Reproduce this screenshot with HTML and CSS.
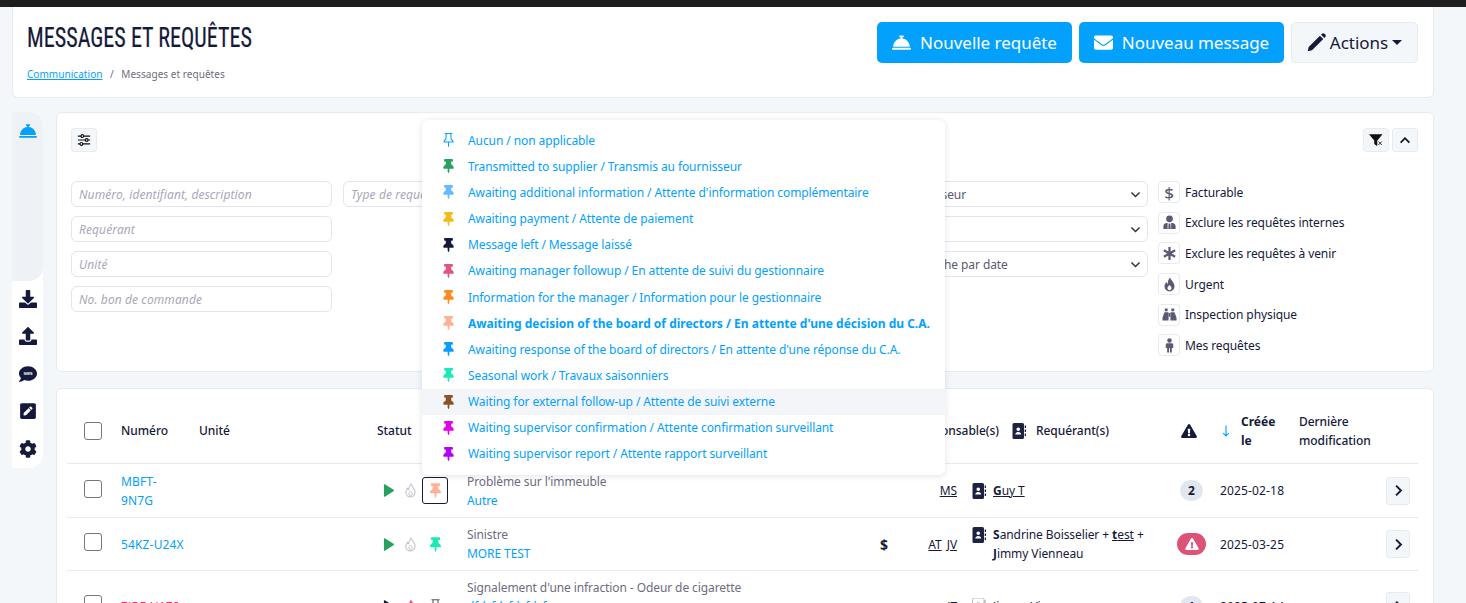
FILE: index.html
```html
<!DOCTYPE html>
<html lang="fr">
<head>
<meta charset="utf-8">
<title>Messages et requêtes</title>
<link rel="stylesheet" href="styles.css">
</head>
<body>
<svg class="sprite" aria-hidden="true">
  <symbol id="i-pin" viewBox="0 0 384 512"><path d="M298.028 214.267L285.793 96H328c13.255 0 24-10.745 24-24V24c0-13.255-10.745-24-24-24H56C42.745 0 32 10.745 32 24v48c0 13.255 10.745 24 24 24h42.207L85.972 214.267C37.465 236.82 0 277.261 0 328c0 13.255 10.745 24 24 24h136v104.007c0 1.242.289 2.467.845 3.578l24 48c2.941 5.882 11.364 5.893 14.311 0l24-48a8.008 8.008 0 0 0 .845-3.578V352h136c13.255 0 24-10.745 24-24-.001-51.183-37.983-91.42-85.973-113.733z"/></symbol>
  <symbol id="i-pin-o" viewBox="0 0 384 512"><path fill="none" stroke="currentColor" stroke-width="38" d="M50 22h284M110 22L96 230C60 250 30 280 24 332h336C354 280 324 250 288 230L274 22M192 340v160"/></symbol>
  <symbol id="i-bell" viewBox="0 0 512 512"><path d="M216 64c-13.3 0-24 10.7-24 24s10.7 24 24 24h16v33.3C119.6 157.2 32 252.4 32 368H480c0-115.6-87.6-210.8-200-222.7V112h16c13.3 0 24-10.7 24-24s-10.7-24-24-24H256 216zM24 400c-13.3 0-24 10.7-24 24s10.7 24 24 24H488c13.3 0 24-10.7 24-24s-10.7-24-24-24H24z"/></symbol>
  <symbol id="i-env" viewBox="0 0 512 512"><path d="M502.3 190.8c3.9-3.1 9.7-.2 9.7 4.7V400c0 26.5-21.5 48-48 48H48c-26.5 0-48-21.5-48-48V195.6c0-5 5.7-7.8 9.7-4.7 22.4 17.4 52.1 39.5 154.1 113.6 21.1 15.4 56.7 47.8 92.2 47.6 35.7.3 72-32.8 92.3-47.6 102-74.1 131.6-96.3 154-113.7zM256 320c23.2.4 56.6-29.2 73.4-41.4 132.7-96.3 142.8-104.7 173.4-128.7 5.8-4.5 9.2-11.5 9.2-18.9v-19c0-26.5-21.5-48-48-48H48C21.5 64 0 85.5 0 112v19c0 7.4 3.4 14.3 9.2 18.9 30.6 23.9 40.7 32.4 173.4 128.7 16.8 12.2 50.2 41.8 73.4 41.4z"/></symbol>
  <symbol id="i-pen" viewBox="0 0 16 16"><path d="M.6 15.400l.8-3.600L10.900 2.300l2.800 2.800-9.500 9.500zM11.800 1.400l.8-.8c.6-.6 1.500-.6 2.100 0l.7.7c.6.6.6 1.500 0 2.100l-.8.8z"/></symbol>
  <symbol id="i-down" viewBox="0 0 512 512"><path d="M216 0h80c13.3 0 24 10.7 24 24v168h87.7c17.8 0 26.7 21.5 14.1 34.1L269.7 378.3c-7.5 7.5-19.8 7.5-27.3 0L90.1 226.1c-12.6-12.6-3.7-34.1 14.1-34.1H192V24c0-13.3 10.7-24 24-24zm296 376v112c0 13.3-10.7 24-24 24H24c-13.3 0-24-10.7-24-24V376c0-13.3 10.7-24 24-24h146.7l49 49c20.1 20.1 52.5 20.1 72.6 0l49-49H488c13.3 0 24 10.7 24 24z"/></symbol>
  <symbol id="i-up" viewBox="0 0 512 512"><path d="M296 384h-80c-13.3 0-24-10.7-24-24V192h-87.7c-17.8 0-26.7-21.5-14.1-34.1L242.3 5.7c7.5-7.5 19.8-7.5 27.3 0l152.2 152.2c12.6 12.6 3.7 34.1-14.1 34.1H320v168c0 13.3-10.7 24-24 24zm216-8v112c0 13.3-10.7 24-24 24H24c-13.3 0-24-10.7-24-24V376c0-13.3 10.7-24 24-24h136v8c0 30.9 25.1 56 56 56h80c30.9 0 56-25.1 56-56v-8h136c13.3 0 24 10.7 24 24z"/></symbol>
  <symbol id="i-sms" viewBox="0 0 512 512"><path d="M256 32C114.6 32 0 125.1 0 240c0 49.6 21.4 95 57 130.7C44.5 421.1 2.7 466 2.2 466.5c-2.2 2.3-2.8 5.7-1.5 8.7 1.3 3 4.1 4.8 7.3 4.8 66.3 0 116-31.8 140.6-51.4 32.7 12.3 69 19.4 107.4 19.4 141.4 0 256-93.1 256-208S397.4 32 256 32z"/><text x="256" y="296" text-anchor="middle" class="sms-label">SMS</text></symbol>
  <symbol id="i-edit" viewBox="0 0 448 512"><path d="M400 480H48c-26.5 0-48-21.5-48-48V80c0-26.5 21.5-48 48-48h352c26.5 0 48 21.5 48 48v352c0 26.5-21.5 48-48 48zM238.1 177.9L102.4 313.6l-6.3 57.1c-.8 7.6 5.6 14.1 13.3 13.3l57.1-6.3L302.2 242c2.3-2.3 2.3-6.1 0-8.5L246.7 178c-2.5-2.4-6.3-2.4-8.6-.1zM345 165.1L314.9 135c-9.4-9.4-24.6-9.4-33.9 0l-23.1 23.1c-2.3 2.3-2.3 6.1 0 8.5l55.5 55.5c2.3 2.3 6.1 2.3 8.5 0L345 199c9.3-9.3 9.3-24.5 0-33.9z"/></symbol>
  <symbol id="i-cog" viewBox="0 0 512 512"><path d="M487.4 315.7l-42.6-24.6c4.3-23.2 4.3-47 0-70.2l42.6-24.6c4.9-2.8 7.1-8.6 5.5-14-11.1-35.6-30-67.8-54.7-94.6-3.8-4.1-10-5.1-14.8-2.3L380.8 110c-17.9-15.4-38.5-27.3-60.8-35.1V25.8c0-5.6-3.9-10.5-9.4-11.7-36.7-8.2-74.3-7.8-109.2 0-5.5 1.2-9.4 6.1-9.4 11.7V75c-22.2 7.9-42.8 19.8-60.8 35.1L88.7 85.5c-4.9-2.8-11-1.9-14.8 2.3-24.7 26.7-43.6 58.9-54.7 94.6-1.7 5.4.6 11.2 5.5 14L67.3 221c-4.3 23.2-4.3 47 0 70.2l-42.6 24.6c-4.9 2.8-7.1 8.6-5.5 14 11.1 35.6 30 67.8 54.7 94.6 3.8 4.1 10 5.1 14.8 2.3l42.6-24.6c17.9 15.4 38.5 27.3 60.8 35.1v49.2c0 5.6 3.9 10.5 9.4 11.7 36.7 8.2 74.3 7.8 109.2 0 5.5-1.2 9.4-6.1 9.4-11.7v-49.2c22.2-7.9 42.8-19.8 60.8-35.1l42.6 24.6c4.9 2.8 11 1.9 14.8-2.3 24.7-26.7 43.6-58.9 54.7-94.6 1.5-5.5-.7-11.3-5.6-14.1zM256 336c-44.1 0-80-35.9-80-80s35.9-80 80-80 80 35.9 80 80-35.9 80-80 80z"/></symbol>
  <symbol id="i-sliders" viewBox="0 0 16 16"><path fill="none" stroke="currentColor" stroke-width="1.3" d="M1 3.5h14M1 8h14M1 12.5h14"/><g fill="#fff" stroke="currentColor" stroke-width="1.3"><circle cx="6" cy="3.5" r="1.6"/><circle cx="11" cy="8" r="1.6"/><circle cx="5" cy="12.5" r="1.6"/></g></symbol>
  <symbol id="i-filter" viewBox="0 0 16 16"><path d="M0 1.500h15.500L9.500 8.500v6.500L6 12.500V8.500z"/><path fill="none" stroke="#f4f7fa" stroke-width="1.800" d="M10 9l5.500 5.500M15.500 9L10 14.500"/><path fill="none" stroke="currentColor" stroke-width="1" d="M10.700 9.700l4 4M14.700 9.700l-4 4"/></symbol>
  <symbol id="i-chev-up" viewBox="0 0 16 16"><path fill="none" stroke="currentColor" stroke-width="2" d="M3 11l5-5 5 5"/></symbol>
  <symbol id="i-chev-right" viewBox="0 0 16 16"><path fill="none" stroke="currentColor" stroke-width="2.4" d="M5 2l6 6-6 6"/></symbol>
  <symbol id="i-chev-down" viewBox="0 0 16 16"><path fill="none" stroke="currentColor" stroke-width="1.8" d="M3 5.5l5 5 5-5"/></symbol>
  <symbol id="i-user-tie" viewBox="0 0 16 16"><circle cx="8" cy="4" r="3.6"/><path d="M1.500 15v-3c0-2 1.500-3.500 3.500-3.500h1v6.500zM9.800 15V8.500h1.200c2 0 3.500 1.500 3.500 3.500v3zM7 9h2l.3 6H6.700z"/></symbol>
  <symbol id="i-asterisk" viewBox="0 0 16 16"><path fill="none" stroke="currentColor" stroke-width="2.400" d="M8 1v14M2 4.500l12 7M14 4.500l-12 7"/></symbol>
  <symbol id="i-fire" viewBox="2.500 .5 11 15"><path fill-rule="evenodd" d="M8.500 1c.5 2.500 4.500 4.500 4.500 9a5 5 0 0 1-10 0c0-2 1-3.500 2-4.500.2 1 .7 1.700 1.300 2C6 5 7 3 8.500 1zM8 8.500c-1 1.200-2 2-2 3.200a2 2 0 0 0 4 0c0-1.200-1-2-2-3.200z"/></symbol>
  <symbol id="i-drop" viewBox="2.500 .5 11 15"><path fill="none" stroke="currentColor" stroke-width="1.100" d="M8.500 1.500c.4 2.500 4 4 4 8.300a4.600 4.600 0 0 1-9.200 0c0-1.800.8-3 1.700-4 .3.800.7 1.300 1.200 1.500C6.300 5.300 7.300 3.300 8.500 1.500z"/><path fill="none" stroke="currentColor" stroke-width="1" d="M8 8.500c-.8 1-1.700 1.800-1.700 2.800a1.700 1.700 0 0 0 3.400 0c0-1-.9-1.800-1.700-2.800z"/></symbol>
  <symbol id="i-binoc" viewBox="0 0 16 16"><path d="M3 1.500h3v3H3zM10 1.500h3v3h-3zM2.600 5.500H7v9H0.500v-3zM9 5.500h4.400l2.100 6v3H9zM7.300 6.500h1.400v4H7.300z"/></symbol>
  <symbol id="i-male" viewBox="0 0 16 16"><circle cx="8" cy="2.700" r="2.400"/><path d="M5.500 5.700h5c.8 0 1.500.7 1.500 1.500v3.500h-1.500V15.500H8.500v-4.500h-1v4.500H5.500v-4.800H4V7.200c0-.8.700-1.500 1.500-1.500z"/></symbol>
  <symbol id="i-warn" viewBox="0 0 576 512"><path d="M569.517 440.013C587.975 472.007 564.806 512 527.94 512H48.054c-36.937 0-59.999-40.055-41.577-71.987L246.423 24c18.467-32.009 64.720-31.951 83.154 0l239.94 416.013zM288 354c-25.405 0-46 20.595-46 46s20.595 46 46 46 46-20.595 46-46-20.595-46-46-46zm-43.673-165.346l7.418 136c.347 6.364 5.609 11.346 11.982 11.346h48.546c6.373 0 11.635-4.982 11.982-11.346l7.418-136c.375-6.874-5.098-12.654-11.982-12.654h-63.383c-6.884 0-12.356 5.780-11.981 12.654z"/></symbol>
  <symbol id="i-book" viewBox="0 0 14 16"><path fill-rule="evenodd" d="M2 0h8.500A1.500 1.500 0 0 1 12 1.500v13a1.500 1.500 0 0 1-1.500 1.500H2a1.500 1.500 0 0 1-1.500-1.500v-13A1.500 1.500 0 0 1 2 0zM6.250 4.500a1.800 1.800 0 1 0 0 3.600 1.800 1.800 0 0 0 0-3.600zM3.300 11.500h5.900c0-1.500-1.300-2.500-2.950-2.500S3.300 10 3.300 11.500z"/><path d="M12.700 2.500H14v2.500h-1.300zM12.700 6.500H14v2.500h-1.300zM12.700 10.500H14v2.500h-1.300z"/></symbol>
  <symbol id="i-play" viewBox="0 0 12 14"><path d="M1 .8c0-.5.5-.8 1-.5l9.500 6a.8.8 0 0 1 0 1.400L2 13.700c-.5.300-1 0-1-.5z"/></symbol>
  <symbol id="i-arrow" viewBox="0 0 8 12"><path fill="none" stroke="currentColor" stroke-width="1.100" d="M4 .5v10.500M1.200 8.200L4 11l2.800-2.800"/></symbol>
</svg>

<div class="topbar"></div>
<div class="page">
  <header class="head-card">
    <div class="head-title">
      <h1>MESSAGES ET REQUÊTES</h1>
      <nav class="crumbs"><a href="#">Communication</a><span class="sep">/</span><span>Messages et requêtes</span></nav>
    </div>
    <div class="head-actions">
      <button class="btn primary"><svg class="ic-bell"><use href="#i-bell"/></svg>Nouvelle requête</button>
      <button class="btn primary"><svg class="ic-env"><use href="#i-env"/></svg>Nouveau message</button>
      <button class="btn light"><svg class="ic-pen"><use href="#i-pen"/></svg>Actions<span class="caret"></span></button>
    </div>
  </header>

  <div class="workspace">
    <aside class="side">
      <div class="side-tab"><svg class="side-ic active"><use href="#i-bell"/></svg></div>
      <div class="side-rest">
        <svg class="side-ic"><use href="#i-down"/></svg>
        <svg class="side-ic"><use href="#i-up"/></svg>
        <svg class="side-ic"><use href="#i-sms"/></svg>
        <svg class="side-ic"><use href="#i-edit"/></svg>
        <svg class="side-ic"><use href="#i-cog"/></svg>
      </div>
    </aside>

    <main class="main">
      <section class="card filters">
        <div class="filter-top">
          <button class="mini"><svg><use href="#i-sliders"/></svg></button>
          <div class="filter-tools">
            <button class="mini"><svg><use href="#i-filter"/></svg></button>
            <button class="mini"><svg><use href="#i-chev-up"/></svg></button>
          </div>
        </div>
        <div class="filter-body">
          <div class="field-grid">
            <div class="field">Numéro, identifiant, description</div>
            <div class="field">Type de requête</div>
            <div class="gap"></div>
            <div class="select">Fournisseur<svg><use href="#i-chev-down"/></svg></div>
            <div class="field">Requérant</div>
            <div class="gap"></div>
            <div class="gap"></div>
            <div class="select"><svg><use href="#i-chev-down"/></svg></div>
            <div class="field">Unité</div>
            <div class="gap"></div>
            <div class="gap"></div>
            <div class="select">Recherche par date<svg><use href="#i-chev-down"/></svg></div>
            <div class="field">No. bon de commande</div>
          </div>
          <ul class="toggles">
            <li><span class="tg"><span class="tg-dollar">$</span></span>Facturable</li>
            <li><span class="tg"><svg><use href="#i-user-tie"/></svg></span>Exclure les requêtes internes</li>
            <li><span class="tg"><svg><use href="#i-asterisk"/></svg></span>Exclure les requêtes à venir</li>
            <li><span class="tg"><svg><use href="#i-fire"/></svg></span>Urgent</li>
            <li><span class="tg"><svg><use href="#i-binoc"/></svg></span>Inspection physique</li>
            <li><span class="tg"><svg><use href="#i-male"/></svg></span>Mes requêtes</li>
          </ul>
        </div>
      </section>

      <section class="card list">
        <div class="thead">
          <span class="box"></span>
          <span>Numéro</span>
          <span>Unité</span>
          <span>Statut</span>
          <span>Description</span>
          <span class="th-resp">Responsable(s)</span>
          <span class="th-book"><svg class="ic-book"><use href="#i-book"/></svg></span>
          <span>Requérant(s)</span>
          <span class="center th-warn"><svg class="ic-warn"><use href="#i-warn"/></svg></span>
          <span class="center sort"><svg class="ic-arrow"><use href="#i-arrow"/></svg></span>
          <strong>Créée<br>le</strong>
          <span>Dernière modification</span>
        </div>

        <div class="trow">
          <span class="box"></span>
          <a href="#" class="num">MBFT-<br>9N7G</a>
          <span></span>
          <span class="status">
            <svg class="ic-play green"><use href="#i-play"/></svg>
            <svg class="ic-drop"><use href="#i-drop"/></svg>
            <span class="pin-slot focused"><svg class="pin peach"><use href="#i-pin"/></svg></span>
          </span>
          <span class="desc">Problème sur l'immeuble<a href="#">Autre</a></span>
          <span></span>
          <span class="resp"><u>MS</u></span>
          <span class="req"><svg class="ic-book"><use href="#i-book"/></svg><span><u><b>G</b>uy T</u></span></span>
          <span class="center"><span class="badge">2</span></span>
          <span class="date">2025-02-18</span>
          <button class="open"><svg><use href="#i-chev-right"/></svg></button>
        </div>

        <div class="trow short">
          <span class="box"></span>
          <a href="#" class="num">54KZ-U24X</a>
          <span></span>
          <span class="status">
            <svg class="ic-play green"><use href="#i-play"/></svg>
            <svg class="ic-drop"><use href="#i-drop"/></svg>
            <span class="pin-slot"><svg class="pin mint"><use href="#i-pin"/></svg></span>
          </span>
          <span class="desc">Sinistre<a href="#">MORE TEST</a></span>
          <b class="dollar">$</b>
          <span class="resp"><u>AT</u> <u>JV</u></span>
          <span class="req top"><svg class="ic-book"><use href="#i-book"/></svg><span><b>S</b>andrine Boisselier + <u><b>t</b>est</u> +<br><b>J</b>immy Vienneau</span></span>
          <span class="center"><span class="badge danger"><svg><use href="#i-warn"/></svg></span></span>
          <span class="date">2025-03-25</span>
          <button class="open"><svg><use href="#i-chev-right"/></svg></button>
        </div>

        <div class="trow tall">
          <span class="box"></span>
          <a href="#" class="num red">7JBF-U1Z8</a>
          <span></span>
          <span class="status">
            <svg class="ic-play navy"><use href="#i-play"/></svg>
            <svg class="ic-fire pink"><use href="#i-fire"/></svg>
            <span class="pin-slot"><svg class="pin outline"><use href="#i-pin-o"/></svg></span>
          </span>
          <span class="desc three">Signalement d'une infraction - Odeur de cigarette<a href="#">dfdsfdsfdsfdsfs</a></span>
          <span></span>
          <span class="resp"><u>JT</u></span>
          <span class="req"><svg class="ic-book faint"><use href="#i-book"/></svg><span>Jimmy Vienneau</span></span>
          <span class="center"><span class="badge">1</span></span>
          <span class="date">2025-07-14</span>
          <button class="open"><svg><use href="#i-chev-right"/></svg></button>
        </div>
      </section>
    </main>
  </div>
</div>

<ul class="menu">
  <li><svg class="c-none"><use href="#i-pin-o"/></svg>Aucun / non applicable</li>
  <li><svg class="c-green"><use href="#i-pin"/></svg>Transmitted to supplier / Transmis au fournisseur</li>
  <li><svg class="c-sky"><use href="#i-pin"/></svg>Awaiting additional information / Attente d'information complémentaire</li>
  <li><svg class="c-yellow"><use href="#i-pin"/></svg>Awaiting payment / Attente de paiement</li>
  <li><svg class="c-navy"><use href="#i-pin"/></svg>Message left / Message laissé</li>
  <li><svg class="c-rose"><use href="#i-pin"/></svg>Awaiting manager followup / En attente de suivi du gestionnaire</li>
  <li><svg class="c-orange"><use href="#i-pin"/></svg>Information for the manager / Information pour le gestionnaire</li>
  <li class="current"><svg class="c-peach"><use href="#i-pin"/></svg>Awaiting decision of the board of directors / En attente d'une décision du C.A.</li>
  <li><svg class="c-blue"><use href="#i-pin"/></svg>Awaiting response of the board of directors / En attente d'une réponse du C.A.</li>
  <li><svg class="c-mint"><use href="#i-pin"/></svg>Seasonal work / Travaux saisonniers</li>
  <li class="hover"><svg class="c-brown"><use href="#i-pin"/></svg>Waiting for external follow-up / Attente de suivi externe</li>
  <li><svg class="c-magenta"><use href="#i-pin"/></svg>Waiting supervisor confirmation / Attente confirmation surveillant</li>
  <li><svg class="c-purple"><use href="#i-pin"/></svg>Waiting supervisor report / Attente rapport surveillant</li>
</ul>
</body>
</html>
```

FILE: styles.css
```css
* { box-sizing: border-box; }
html, body { margin: 0; height: 603px; overflow: hidden; }
body {
  position: relative;
  background: #f4f7fa;
  color: #15193a;
  font-family: "Noto Sans", "Open Sans", sans-serif;
  font-size: 12px;
  line-height: 19px;
  letter-spacing: -0.09px;
}
a { color: #03a1fc; text-decoration: none; }
b, strong { letter-spacing: 0; }
ul { list-style: none; margin: 0; padding: 0; }
button { font-family: inherit; cursor: pointer; }
.sprite { position: absolute; width: 0; height: 0; }
.sms-label { font: 700 120px "Liberation Sans", sans-serif; fill: #fff; }

.topbar { height: 7px; background: #1e1e1e; }
.page { padding: 0 32px 0 12px; }

.head-card {
  height: 91px;
  background: #fff;
  border: 1px solid #e7ebf1;
  border-top: 0;
  border-radius: 0 0 6px 6px;
  padding: 15px 15px 0 14px;
  display: flex;
  justify-content: space-between;
  align-items: flex-start;
}
h1 {
  margin: 1px 0 0;
  font: 400 28px/30px "Roboto Condensed", "Liberation Sans Narrow", sans-serif;
  color: #15193a;
  letter-spacing: 0;
  white-space: nowrap;
  transform: scaleX(.79);
  transform-origin: left center;
  -webkit-text-stroke: .2px #15193a;
}
.crumbs { margin-top: 13px; font-size: 10px; line-height: 16px; color: #6f6b80; letter-spacing: .05px; }
.crumbs a { text-decoration: underline; }
.crumbs .sep { margin: 0 7.5px; }
.head-actions { display: flex; gap: 7px; }
.btn {
  height: 41px;
  border-radius: 5px;
  border: 1px solid transparent;
  font-size: 17px;
  letter-spacing: -0.03px;
  display: flex;
  align-items: center;
  justify-content: center;
  padding: 0;
}
.btn svg { fill: currentColor; }
.btn.primary { background: #03a1fc; color: #fff; }
.btn.primary:nth-child(1) { width: 195px; }
.btn.primary:nth-child(2) { width: 205px; }
.btn.light { width: 127px; background: #f4f7fa; border-color: #e7ebf1; color: #15193a; }
.ic-bell { width: 19px; height: 19px; margin-right: 9px; }
.ic-env { width: 19px; height: 19px; margin-right: 9px; }
.ic-pen { width: 19px; height: 19px; margin-right: 4px; }
.caret { margin-left: 4px; border: 5px solid transparent; border-top-color: currentColor; border-bottom: 0; }

.workspace { display: flex; gap: 13px; margin-top: 14px; align-items: flex-start; }
.side { width: 31px; flex: none; background: #fff; border-radius: 0 14px 14px 0; height: 356px; }
.side-tab { height: 169px; background: #eef2f6; border-radius: 0 14px 14px 0; padding-top: 10px; display: flex; justify-content: center; }
.side-ic { width: 18px; height: 18px; fill: #15193a; display: block; flex: none; }
.side-ic.active { fill: #03a1fc; }
.side-rest { display: flex; flex-direction: column; align-items: center; gap: 19.4px; padding-top: 9px; }

.main { flex: 1; min-width: 0; display: flex; flex-direction: column; gap: 16px; }
.card { background: #fff; border: 1px solid #e7ebf1; border-radius: 6px; }

.filters { height: 260px; padding: 15px 15px 0 14px; }
.filter-top { display: flex; justify-content: space-between; }
.filter-tools { display: flex; gap: 3px; }
.mini {
  width: 26px; height: 24px; padding: 0;
  display: flex; align-items: center; justify-content: center;
  background: #f4f7fa; border: 1px solid #e7ebf1; border-radius: 3px; color: #111;
}
.mini svg { width: 14px; height: 14px; fill: currentColor; }
.filter-body { display: flex; margin-top: 29px; gap: 11px; }
.field-grid { width: 1076px; display: grid; grid-template-columns: repeat(4, 261px); gap: 9px 11px; align-content: start; }
.field, .select {
  height: 26px;
  border: 1px solid #e2e4ef;
  border-radius: 6px;
  display: flex;
  align-items: center;
}
.field { padding-left: 7px; padding-right: 7px; font-style: italic; letter-spacing: .1px; color: #a9a7b8; white-space: nowrap; overflow: hidden; }
.select { padding-left: 12px; justify-content: space-between; color: #5b5870; }
.select svg { width: 13px; height: 13px; margin: 0 5px 0 auto; color: #333; }
.toggles { display: flex; flex-direction: column; gap: 8.7px; }
.toggles li { display: flex; align-items: center; gap: 5px; height: 22px; white-space: nowrap; color: #15193a; }
.tg {
  width: 22px; height: 22px; flex: none;
  border: 1px solid #e7ebf1; border-radius: 4px;
  display: flex; align-items: center; justify-content: center;
  color: #5a5a74;
}
.tg svg { width: 15px; height: 15px; fill: currentColor; }
.tg-dollar { font-size: 17px; font-weight: 500; }

.thead, .trow { display: grid; align-items: center; margin: 0 15px 0 10px; border-bottom: 1px solid #e7ebf1; }
.thead {
  grid-template-columns: 54px 78px 178px 90px 403px 129px 37px 134px 43px 28px 58px 1fr;
  height: 75px;
  padding-top: 9px;
  font-weight: 500;
  letter-spacing: -0.05px;
}
.thead strong { font-weight: 700; }
.trow { grid-template-columns: 54px 78px 178px 90px 403px 30px 65px 205px 43px 173px 32px; height: 54px; }
.trow.short { height: 53px; }
.trow.tall { height: 70px; border-bottom: 0; }
.box { width: 18px; height: 18px; margin-left: 17px; border: 1px solid #787878; border-radius: 3px; background: #fff; display: block; }
.trow .box { margin-bottom: 4px; }
.th-resp { text-align: right; white-space: nowrap; }
.th-book { padding-left: 13px; display: flex; }
.th-warn { padding-right: 6px; }
.ic-book { width: 14px; height: 16px; fill: #1d2240; display: block; flex: none; }
.ic-book.faint { fill: none; stroke: #bbb; stroke-width: 1; }
.center { display: flex; justify-content: center; align-items: center; }
.ic-warn { width: 16px; height: 14px; fill: #15193a; }
.sort { color: #03a1fc; padding-right: 2px; }
.ic-arrow { width: 8px; height: 12px; }
.num { display: block; letter-spacing: .15px; }
.num.red { color: #ef2f6b; }
.status { display: flex; align-items: center; padding-left: 6px; }
.ic-play { width: 11px; height: 13px; flex: none; }
.green { fill: #28a05f; }
.navy { fill: #15193a; }
.pink { fill: #e0567c; }
.ic-drop { width: 11px; height: 15px; margin-left: 11px; color: #c4c4cc; flex: none; }
.ic-fire { width: 11px; height: 15px; margin-left: 11px; flex: none; }
.pin-slot { width: 26px; height: 27px; margin-left: 6px; flex: none; display: flex; align-items: center; justify-content: center; border: 1px solid transparent; border-radius: 3px; }
.pin-slot.focused { border-color: #15193a; }
.pin { width: 11px; height: 15px; }
.pin.peach { fill: #ffb097; }
.pin.mint { fill: #1de9b6; }
.pin.outline { color: #555; fill: none; }
.desc { color: #6f6b80; white-space: nowrap; }
.desc.three { padding-bottom: 19px; }
.desc a { display: block; }
.dollar { font-size: 14px; padding-left: 10px; }
.resp { text-align: right; padding-right: 8px; word-spacing: 2px; }
.req { display: flex; align-items: center; gap: 7px; padding-left: 7px; }
.req.top { align-items: flex-start; }
.req.top .ic-book { margin-top: 2px; }
.req > span { display: block; }
.badge { min-width: 23px; height: 21px; padding: 0 5px; border-radius: 11px; background: #e2e6ef; font-weight: 700; display: flex; align-items: center; justify-content: center; }
.badge.danger { width: 29px; height: 22px; background: #dd5279; }
.badge.danger svg { width: 14px; height: 12px; fill: #fff; }
.date { padding-left: 7px; letter-spacing: .15px; }
.open {
  width: 24px; height: 28px; padding: 0;
  background: #f4f7fa; border: 1px solid #e7ebf1; border-radius: 3px;
  display: flex; align-items: center; justify-content: center; color: #15193a;
}
.open svg { width: 13px; height: 13px; }

.menu {
  position: absolute;
  left: 422px; top: 120px;
  width: 523px; height: 355px;
  background: #fff;
  border-radius: 6px;
  box-shadow: 0 1px 6px rgba(40, 50, 80, .14);
  padding: 7px 0 0;
  color: #03a1fc;
}
.menu li { height: 26.17px; display: flex; align-items: center; padding-left: 21px; white-space: nowrap; }
.menu svg { width: 11px; height: 14px; margin-right: 14px; flex: none; fill: currentColor; }
.menu .current { font-weight: 700; letter-spacing: 0; }
.menu .hover { background: #f4f5f9; }
.c-none { color: #03a1fc; }
.c-green { color: #28a05f; }
.c-sky { color: #66b8ff; }
.c-yellow { color: #f2bb1c; }
.c-navy { color: #15193a; }
.c-rose { color: #e0567c; }
.c-orange { color: #ff8a1f; }
.c-peach { color: #ffb097; }
.c-blue { color: #0a9cff; }
.c-mint { color: #1de9b6; }
.c-brown { color: #8b5228; }
.c-magenta { color: #e600e6; }
.c-purple { color: #b400ff; }
```
